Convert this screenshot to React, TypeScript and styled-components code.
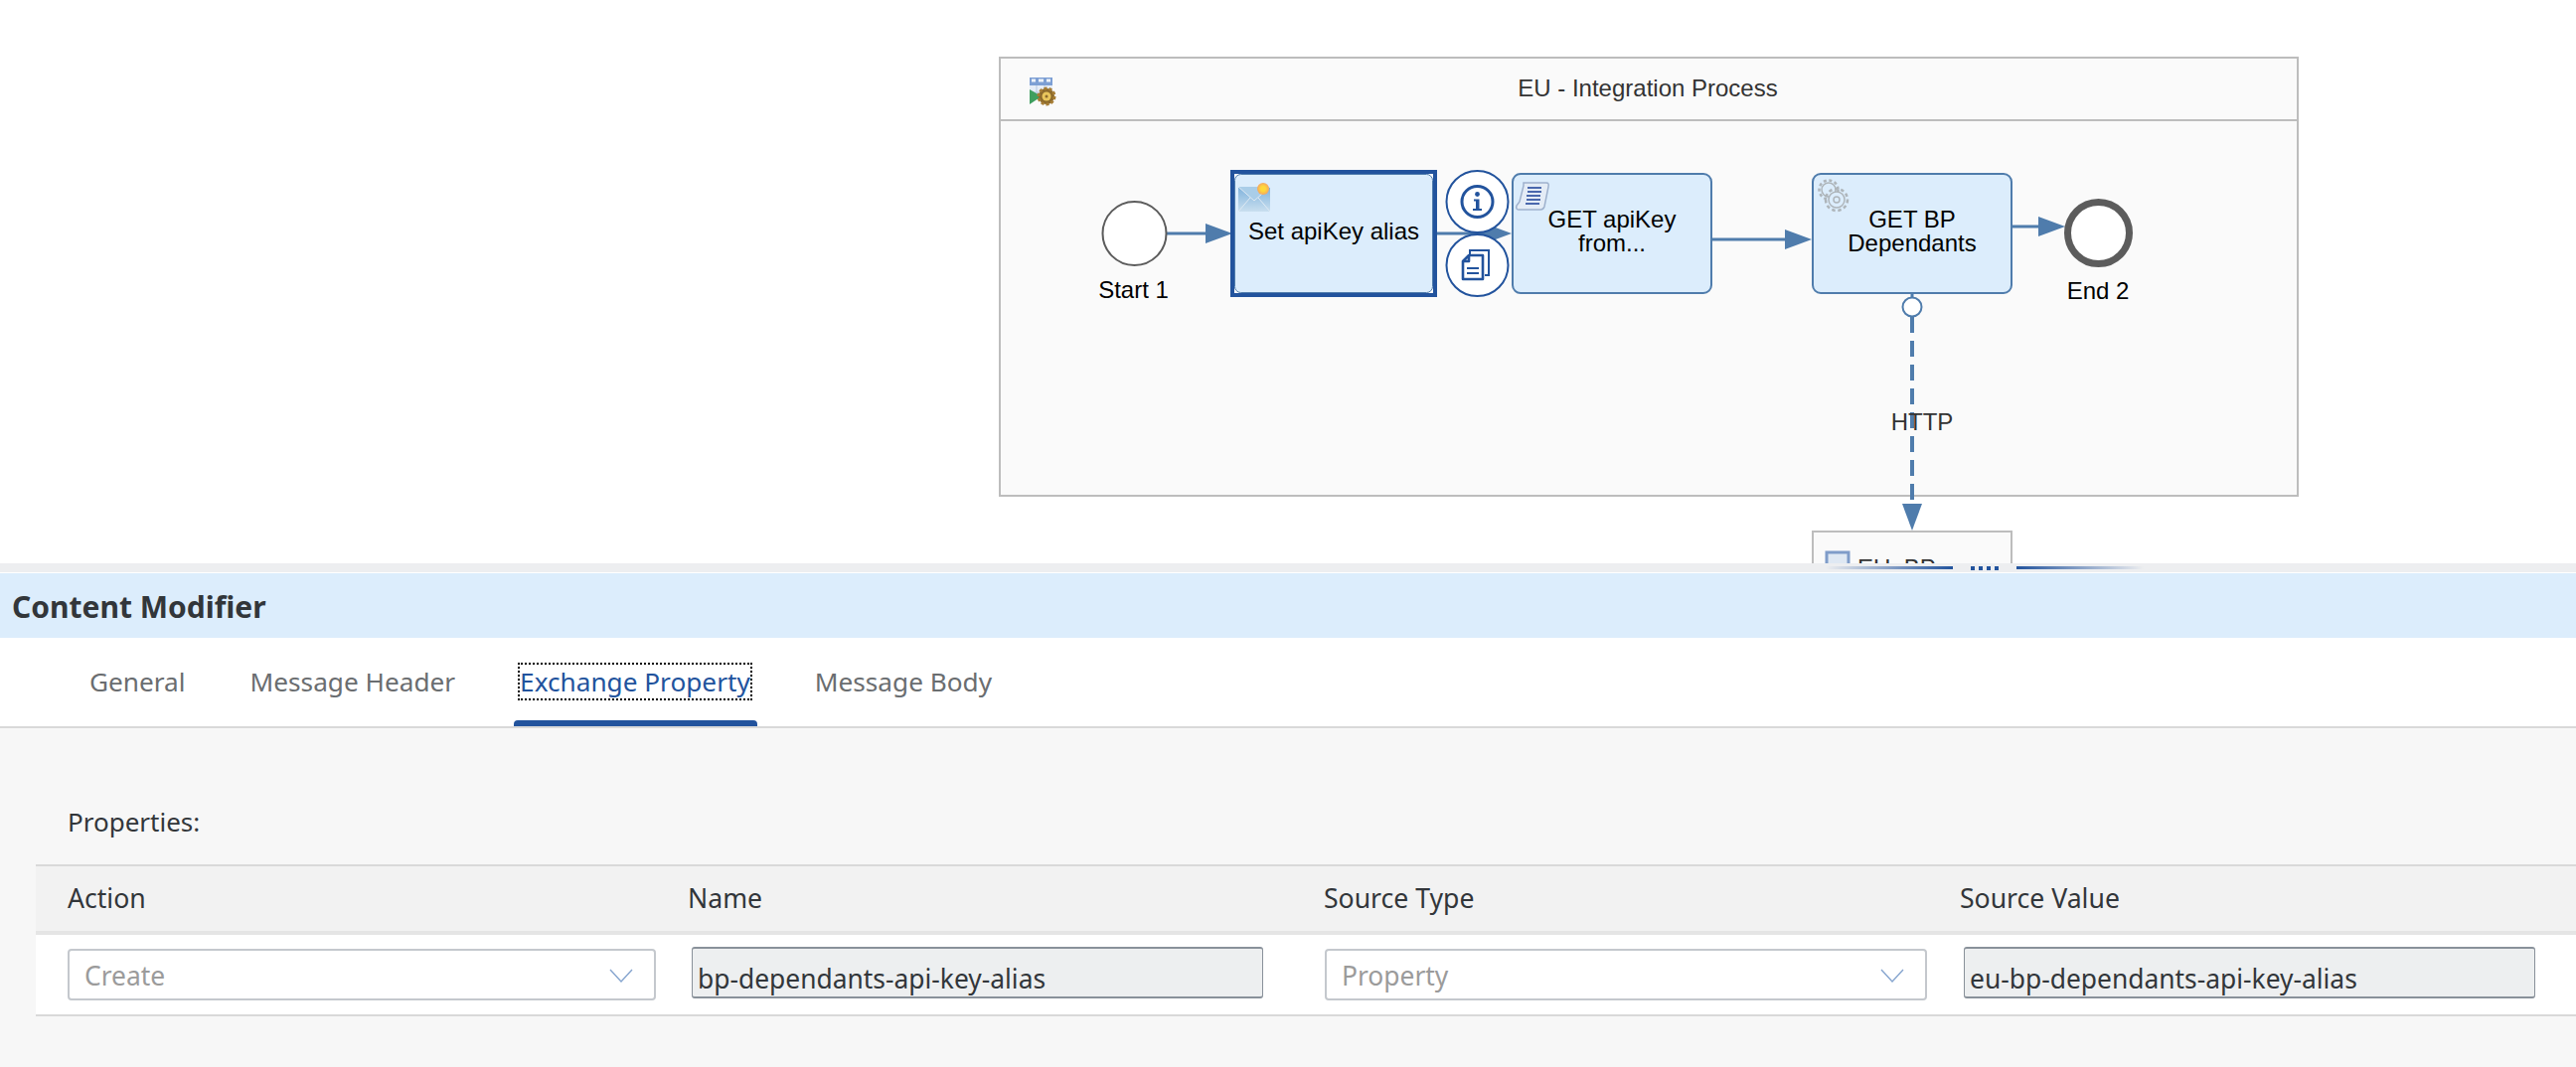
import React, { FC } from "react";
import styled, { createGlobalStyle } from "styled-components";

const LINE = "#4f7cac";
const NODE_FILL = "#dcedfc";
const SAP_BLUE = "#22539d";
const TEXT = "#32363a";

const GlobalStyle = createGlobalStyle`
  html, body {
    margin: 0;
    padding: 0;
    height: 100%;
    overflow: hidden;
    background: #fff;
    font-family: "Noto Sans", "Open Sans", sans-serif;
  }
`;

interface Flow {
  x1: number;
  x2: number;
  y: number;
}

const flows: Flow[] = [
  { x1: 1174, x2: 1240, y: 235 },
  { x1: 1446, x2: 1521, y: 235 },
  { x1: 1722, x2: 1823, y: 241 },
  { x1: 2024, x2: 2078, y: 228 },
];

const FlowArrow: FC<Flow> = ({ x1, x2, y }) => (
  <g>
    <Connector x1={x1} y1={y} x2={x2 - 20} y2={y} />
    <ArrowHead points={`${x2 - 27},${y - 10} ${x2},${y} ${x2 - 27},${y + 10}`} />
  </g>
);

const EnvelopeIcon: FC = () => (
  <g>
    <defs>
      <linearGradient id="env" x1="0" y1="0" x2="0" y2="1">
        <stop offset="0" stopColor="#7fb2dc" />
        <stop offset="1" stopColor="#c9dfef" />
      </linearGradient>
      <radialGradient id="sun">
        <stop offset="0.4" stopColor="#ffd83a" />
        <stop offset="1" stopColor="#f4a762" />
      </radialGradient>
    </defs>
    <rect x="1246" y="188" width="32" height="25" fill="url(#env)" />
    <path d="M1246 188 L1262 202 L1278 188" fill="#a9cde8" stroke="#dfeaf3" strokeWidth="1" />
    <path d="M1246 213 L1258 199 M1278 213 L1266 199" stroke="#dfeaf3" strokeWidth="1" fill="none" />
    <circle cx="1271" cy="190" r="6" fill="url(#sun)" />
  </g>
);

const ScriptIcon: FC = () => (
  <g>
    <path
      d="M1533 184 H1556 Q1559 184 1558 188 L1554 208 Q1553 211 1550 211 H1528 Q1525 211 1526 207 L1529 203 L1533 187 Z"
      fill="#e4ecf6"
      stroke="#9eb1cd"
      strokeWidth="1.5"
    />
    <path
      d="M1537 189 H1551 M1537 193 H1551 M1536 197 H1550 M1536 201 H1550 M1535 205 H1549"
      stroke="#4a68ad"
      strokeWidth="2"
      fill="none"
    />
  </g>
);

const GearIcon: FC = () => (
  <g fill="none" stroke="#aeb5ba">
    <circle cx="1840" cy="191" r="7" strokeWidth="1.5" />
    <circle cx="1840" cy="191" r="9.5" strokeWidth="2.5" strokeDasharray="3 2.6" />
    <circle cx="1848" cy="201" r="8" fill={NODE_FILL} strokeWidth="1.5" />
    <circle cx="1848" cy="201" r="11" strokeWidth="2.5" strokeDasharray="3.4 2.8" />
    <circle cx="1848" cy="201" r="3" strokeWidth="1.5" />
  </g>
);

const PoolIcon: FC = () => (
  <g>
    <rect x="1036" y="78" width="23" height="22" fill="#e6edf7" />
    <rect x="1036" y="78" width="23" height="8" fill="#7d9fd4" />
    <path
      d="M1038 81 H1042 M1045 81 H1050 M1053 81 H1057"
      stroke="#eef3fa"
      strokeWidth="3"
    />
    <path d="M1043 86 V100 M1051 86 V100 M1036 93 H1059" stroke="#b7c8e2" strokeWidth="1" />
    <path d="M1036 90 L1048 97 L1036 105 Z" fill="#3f9f5f" />
    <circle cx="1053" cy="97" r="8" fill="#8c6a2c" />
    <circle cx="1053" cy="97" r="8" fill="none" stroke="#a67c33" strokeWidth="3" strokeDasharray="3 2" />
    <circle cx="1053" cy="97" r="4.5" fill="#e9c65c" />
    <circle cx="1053" cy="97" r="1.5" fill="#8c6a2c" />
  </g>
);

const InfoIcon: FC = () => (
  <g>
    <HelperRing cx="1486.5" cy="203" r="31" />
    <circle cx="1486.5" cy="203" r="15.5" fill="none" stroke={SAP_BLUE} strokeWidth="3" />
    <circle cx="1486.5" cy="195.5" r="2.4" fill={SAP_BLUE} />
    <path d="M1483 200.5 H1488.5 V210 H1491 V212 H1482 V210 H1485 V202.5 H1483 Z" fill={SAP_BLUE} />
  </g>
);

const CopyIcon: FC = () => (
  <g>
    <HelperRing cx="1486.5" cy="267" r="31" />
    <path d="M1479 257 V252 H1498 V277 H1494" fill="none" stroke={SAP_BLUE} strokeWidth="2" />
    <path
      d="M1478 257 H1492 V281 H1472 V263 Z M1478 257 V263 H1472"
      fill="#fff"
      stroke={SAP_BLUE}
      strokeWidth="2.6"
      strokeLinejoin="round"
    />
    <path d="M1476 270 H1488 M1476 275 H1488" stroke={SAP_BLUE} strokeWidth="2" />
  </g>
);

const Diagram: FC = () => (
  <Canvas viewBox="0 0 2592 567">
    <Pool x="1006" y="58" width="1306" height="441" />
    <PoolDivider x1="1006" y1="121" x2="2312" y2="121" />
    <PoolIcon />
    <PoolTitle x="1658" y="97">
      EU - Integration Process
    </PoolTitle>

    {flows.map((flow) => (
      <FlowArrow key={flow.x1} {...flow} />
    ))}

    <StartEvent cx="1141.5" cy="235" r="32" />
    <NodeLabel x="1140.5" y="300">
      Start 1
    </NodeLabel>
    <EndEvent cx="2111.5" cy="234.5" r="31" />
    <NodeLabel x="2111" y="301">
      End 2
    </NodeLabel>

    <SelectedFrame x="1238" y="171" width="208" height="128" />
    <SelectedInset x="1242" y="175" width="200" height="120" />
    <Step x="1242.5" y="175.5" width="199" height="119" rx="6" $thin />
    <EnvelopeIcon />
    <NodeLabel x="1342" y="241">
      Set apiKey alias
    </NodeLabel>

    <Step x="1522" y="175" width="200" height="120" rx="8" />
    <ScriptIcon />
    <NodeLabel x="1622" y="229">
      GET apiKey
    </NodeLabel>
    <NodeLabel x="1622" y="253">
      from...
    </NodeLabel>

    <Step x="1824" y="175" width="200" height="120" rx="8" />
    <GearIcon />
    <NodeLabel x="1924" y="229">
      GET BP
    </NodeLabel>
    <NodeLabel x="1924" y="253">
      Dependants
    </NodeLabel>

    <InfoIcon />
    <CopyIcon />

    <Connector x1="1924" y1="295" x2="1924" y2="299" />
    <MessageFlow x1="1924" y1="319" x2="1924" y2="503" />
    <StartEvent cx="1924" cy="309" r="9.5" $flow />
    <ArrowHead points="1914,507 1934,507 1924,534" />
    <EdgeLabel x="1934" y="433">
      HTTP
    </EdgeLabel>

    <Receiver x="1824" y="535" width="200" height="60" />
    <rect x="1838" y="556" width="22" height="22" fill="#dfe8f3" stroke="#7f9cc9" strokeWidth="3" />
    <ReceiverLabel x="1869" y="580">
      EU_BP
    </ReceiverLabel>
  </Canvas>
);

const Splitter: FC = () => (
  <SplitterBar>
    <Grip $side="left" />
    <GripDots>
      <GripDot />
      <GripDot />
      <GripDot />
      <GripDot />
    </GripDots>
    <Grip $side="right" />
  </SplitterBar>
);

const Chevron: FC = () => (
  <ChevronIcon viewBox="0 0 24 14">
    <path d="M1 1 L12 13 L23 1" fill="none" stroke="#86a5cf" strokeWidth="1.4" />
  </ChevronIcon>
);

const tabs = ["General", "Message Header", "Exchange Property", "Message Body"];
const columns = ["Action", "Name", "Source Type", "Source Value"];

const App: FC = () => (
  <Page>
    <GlobalStyle />
    <DiagramArea>
      <Diagram />
    </DiagramArea>
    <Splitter />
    <TitleBar>Content Modifier</TitleBar>
    <TabBar>
      {tabs.map((tab) => (
        <Tab key={tab} $active={tab === "Exchange Property"}>
          <TabLabel $active={tab === "Exchange Property"}>{tab}</TabLabel>
        </Tab>
      ))}
    </TabBar>
    <Content>
      <SectionLabel>Properties:</SectionLabel>
      <Table>
        <HeaderRow>
          {columns.map((column) => (
            <HeaderCell key={column}>{column}</HeaderCell>
          ))}
        </HeaderRow>
        <BodyRow>
          <Select $width={592}>
            <span>Create</span>
            <Chevron />
          </Select>
          <ReadOnlyInput $offset={4}>bp-dependants-api-key-alias</ReadOnlyInput>
          <Select $width={606} $offset={1}>
            <span>Property</span>
            <Chevron />
          </Select>
          <ReadOnlyInput $offset={4}>eu-bp-dependants-api-key-alias</ReadOnlyInput>
        </BodyRow>
      </Table>
    </Content>
  </Page>
);

export default App;

const Page = styled.div`
  display: flex;
  flex-direction: column;
  height: 1074px;
  overflow: hidden;
`;

const DiagramArea = styled.div`
  height: 567px;
  flex: none;
  overflow: hidden;
`;

const Canvas = styled.svg`
  display: block;
  width: 2592px;
  height: 567px;
  font-family: "Liberation Sans", Arial, sans-serif;
`;

const Pool = styled.rect`
  fill: #fafafa;
  stroke: #bdbdbd;
  stroke-width: 2;
`;

const PoolDivider = styled.line`
  stroke: #bdbdbd;
  stroke-width: 2;
`;

const PoolTitle = styled.text`
  font-size: 24px;
  fill: #333;
  text-anchor: middle;
`;

const NodeLabel = styled.text`
  font-size: 24px;
  fill: #000;
  text-anchor: middle;
`;

const EdgeLabel = styled.text`
  font-size: 24px;
  fill: #333;
  text-anchor: middle;
`;

const ReceiverLabel = styled.text`
  font-size: 24px;
  fill: #333;
`;

const Connector = styled.line`
  stroke: ${LINE};
  stroke-width: 3;
`;

const MessageFlow = styled.line`
  stroke: ${LINE};
  stroke-width: 4;
  stroke-dasharray: 16 8;
`;

const ArrowHead = styled.polygon`
  fill: ${LINE};
`;

const StartEvent = styled.circle<{ $flow?: boolean }>`
  fill: #fff;
  stroke: ${(props) => (props.$flow ? LINE : "#5c5c5c")};
  stroke-width: 2;
`;

const EndEvent = styled.circle`
  fill: #fff;
  stroke: #5c5c5c;
  stroke-width: 7;
`;

const Step = styled.rect<{ $thin?: boolean }>`
  fill: ${NODE_FILL};
  stroke: ${LINE};
  stroke-width: ${(props) => (props.$thin ? 1 : 2)};
`;

const SelectedFrame = styled.rect`
  fill: ${SAP_BLUE};
`;

const SelectedInset = styled.rect`
  fill: #fff;
`;

const HelperRing = styled.circle`
  fill: #fff;
  stroke: ${SAP_BLUE};
  stroke-width: 2;
`;

const Receiver = styled.rect`
  fill: #fafafa;
  stroke: #bdbdbd;
  stroke-width: 2;
`;

const SplitterBar = styled.div`
  box-sizing: border-box;
  height: 10px;
  flex: none;
  display: flex;
  align-items: center;
  padding-left: 1837px;
  background: #edeef0;
  border-bottom: 1px solid #fff;
`;

const Grip = styled.div<{ $side: "left" | "right" }>`
  width: 128px;
  height: 3px;
  flex: none;
  background: linear-gradient(
    ${(props) => (props.$side === "left" ? "to right" : "to left")},
    transparent,
    ${SAP_BLUE}
  );
`;

const GripDots = styled.div`
  display: flex;
  gap: 4px;
  flex: none;
  margin: 0 18px;
`;

const GripDot = styled.div`
  width: 4px;
  height: 4px;
  background: ${SAP_BLUE};
`;

const TitleBar = styled.div`
  box-sizing: border-box;
  height: 65px;
  flex: none;
  display: flex;
  align-items: center;
  padding: 2px 0 0 12px;
  background: ${NODE_FILL};
  color: ${TEXT};
  font-size: 30px;
  font-weight: 700;
`;

const TabBar = styled.div`
  height: 89px;
  flex: none;
  display: flex;
  gap: 65px;
  padding-left: 90px;
  background: #fff;
  border-bottom: 2px solid #d9d9d9;
`;

const Tab = styled.div<{ $active?: boolean }>`
  position: relative;
  display: flex;
  align-items: center;
  font-size: 26.2px;
  color: ${(props) => (props.$active ? SAP_BLUE : "#6a6d70")};

  ${(props) =>
    props.$active &&
    `&::after {
      content: "";
      position: absolute;
      left: -6px;
      right: -7px;
      bottom: 0;
      height: 6px;
      background: ${SAP_BLUE};
      border-radius: 4px 4px 0 0;
    }`}
`;

const TabLabel = styled.span<{ $active?: boolean }>`
  line-height: 34px;
  margin-bottom: 2px;
  outline: ${(props) => (props.$active ? "2px dotted #000" : "none")};
  outline-offset: 0;
`;

const Content = styled.div`
  flex: 1;
  background: #f7f7f7;
  padding: 0 0 0 36px;
`;

const SectionLabel = styled.div`
  padding: 75px 0 0 32px;
  height: 62px;
  font-size: 26px;
  line-height: 38px;
  color: ${TEXT};
`;

const Table = styled.div`
  display: flex;
  flex-direction: column;
`;

const HeaderRow = styled.div`
  display: grid;
  grid-template-columns: 624px 640px 640px 1fr;
  align-items: center;
  height: 65px;
  padding-left: 32px;
  background: #f2f2f2;
  border-top: 2px solid #d9d9d9;
  border-bottom: 4px solid #e5e5e5;
`;

const HeaderCell = styled.div`
  font-size: 26.6px;
  margin-bottom: 2px;
  color: ${TEXT};
`;

const BodyRow = styled.div`
  display: grid;
  grid-template-columns: 624px 640px 640px 1fr;
  align-items: center;
  height: 80px;
  padding-left: 32px;
  background: #fff;
  border-bottom: 2px solid #d9d9d9;
`;

const Select = styled.div<{ $width: number; $offset?: number }>`
  box-sizing: border-box;
  display: flex;
  align-items: center;
  justify-content: space-between;
  width: ${(props) => props.$width}px;
  height: 52px;
  margin-left: ${(props) => props.$offset ?? 0}px;
  padding: 1px 21px 0 15px;
  background: #fff;
  border: 2px solid #c4c8cd;
  border-radius: 4px;
  font-size: 26.4px;
  color: #9b9b9b;
`;

const ChevronIcon = styled.svg`
  width: 24px;
  height: 14px;
  flex: none;
`;

const ReadOnlyInput = styled.div<{ $offset?: number }>`
  box-sizing: border-box;
  display: flex;
  align-items: center;
  width: 575px;
  height: 52px;
  margin-left: ${(props) => props.$offset ?? 0}px;
  margin-bottom: 4px;
  padding: 12px 0 0 5px;
  background: #edeff0;
  border: 1px solid #89919a;
  border-top-width: 2px;
  border-bottom-width: 2px;
  border-radius: 3px;
  font-size: 26.4px;
  color: ${TEXT};
`;
